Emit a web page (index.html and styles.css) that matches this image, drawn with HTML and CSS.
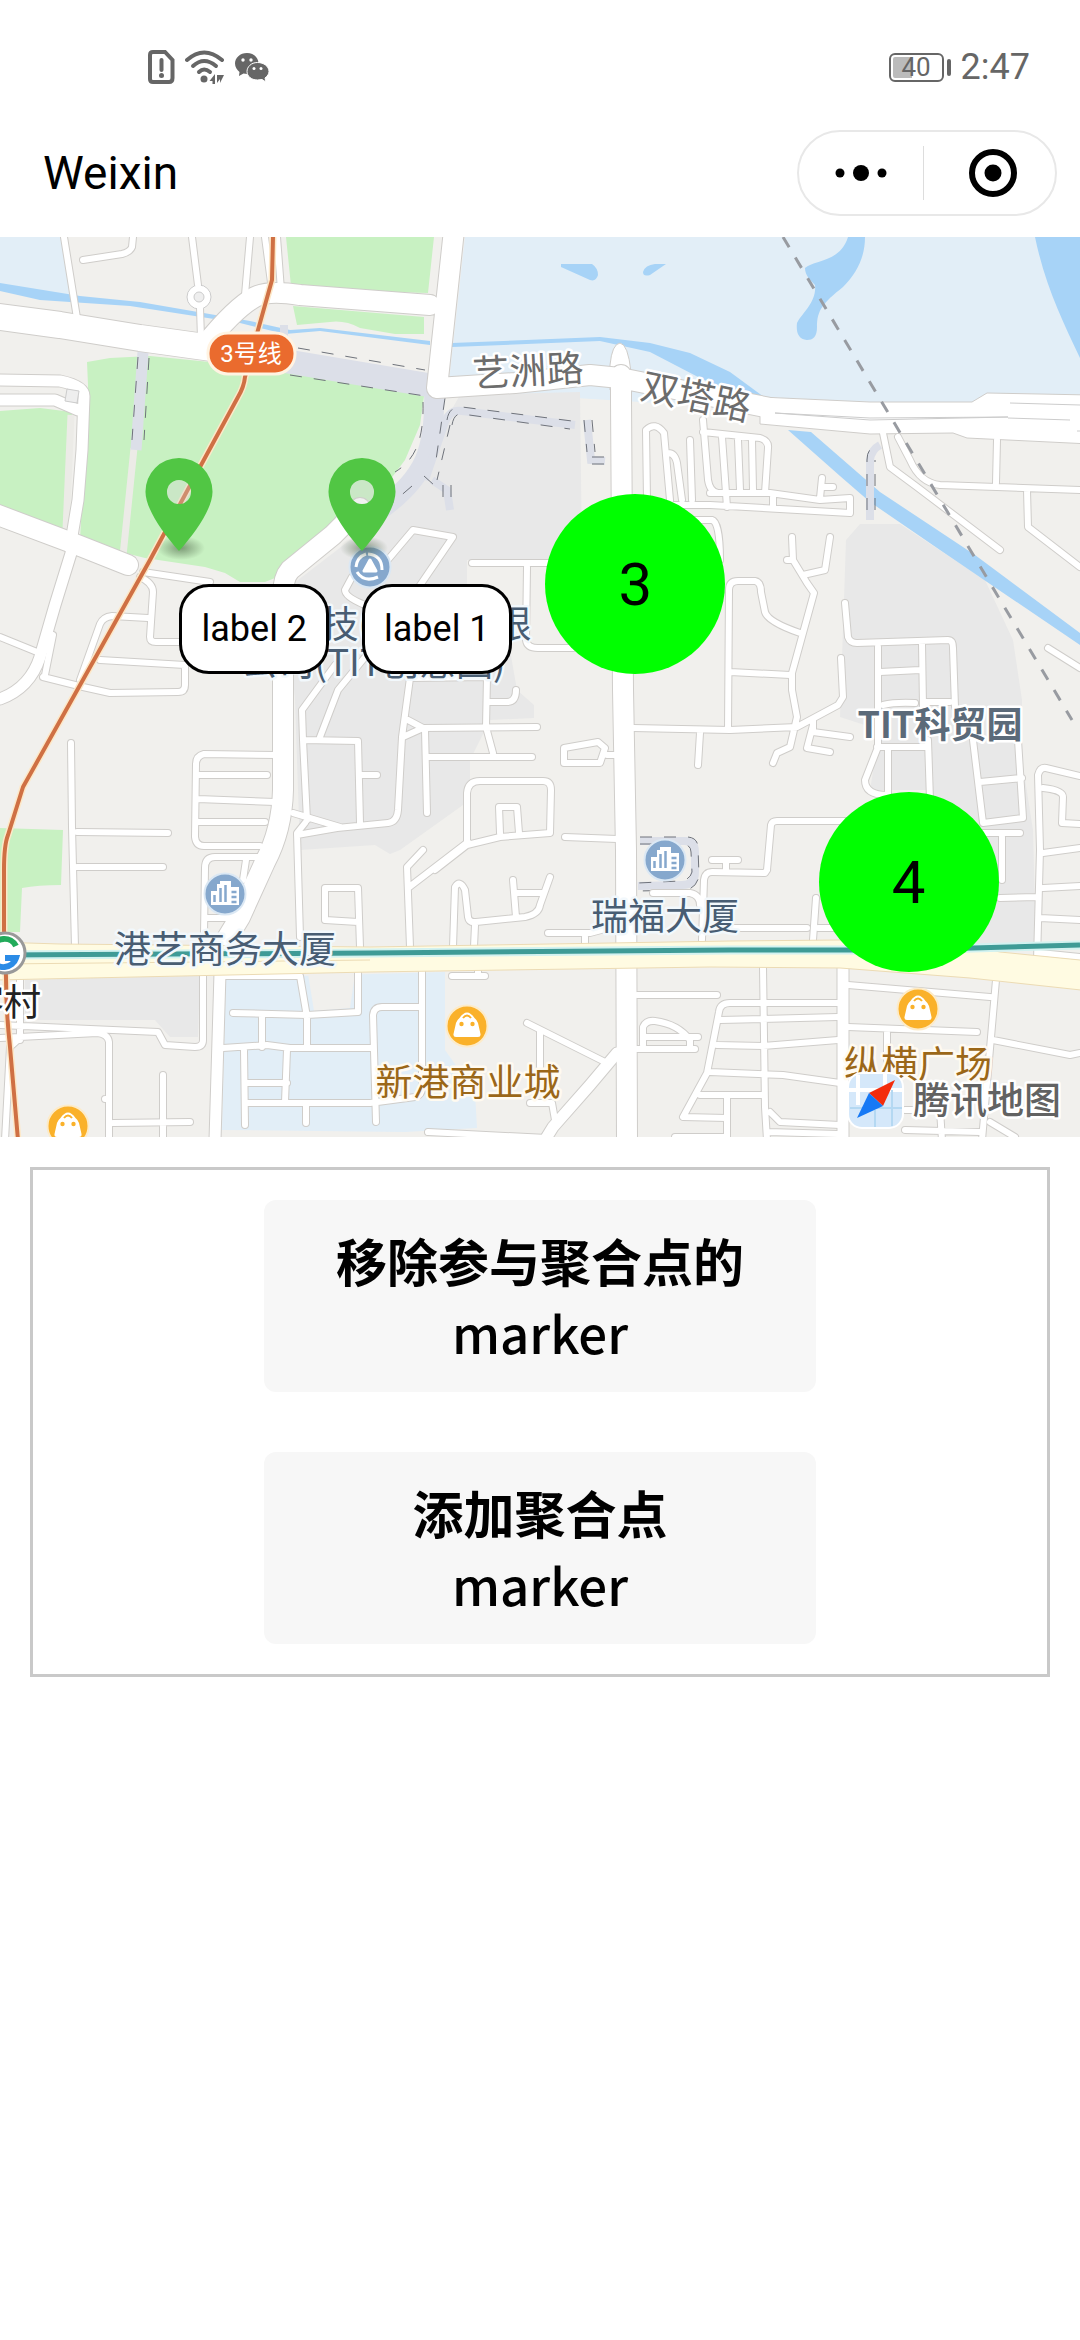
FILE: index.html
```html
<!DOCTYPE html>
<html lang="zh-CN">
<head>
    <meta charset="UTF-8">
    <meta name="viewport" content="width=device-width, initial-scale=1.0">
    <title>Weixin</title>
    <link rel="stylesheet" href="styles.css">
</head>
<body>
    <div class="status-bar">
        <div class="status-icons">
            <svg width="27" height="34" viewBox="0 0 27 34">
                <path d="M5 2H17L24.500 10V28Q24.500 32 21 32H5Q2 32 2 29V5Q2 2 5 2Z" fill="none" stroke="#666" stroke-width="4"/>
                <path d="M13.500 10V20" stroke="#666" stroke-width="4" stroke-linecap="round"/>
                <circle cx="13.500" cy="25.500" r="2.500" fill="#666"/>
            </svg>
            <svg width="40" height="34" viewBox="0 0 40 34">
                <g fill="none" stroke="#666" stroke-width="4" stroke-linecap="round">
                    <path d="M2 10Q19 -5 37 10"/>
                    <path d="M8 16Q19 6 31 16"/>
                    <path d="M14 22Q19 17 25 22"/>
                </g>
                <circle cx="19" cy="29" r="3.500" fill="#666"/>
                <path d="M30 24V34H27.500V31H24.500ZM32 25H39L35 33V29L32 33Z" fill="#666"/>
            </svg>
            <svg width="34" height="30" viewBox="0 0 34 30">
                <path d="M12 1C5 1 0 6 0 11.500C0 15 2 18 4.500 20L4 24L8.500 21.500L12 22C19 22 23.500 17 23.500 11.500S19 1 12 1Z" fill="#666"/>
                <path d="M22.500 10.500C16 10.500 12 15 12 19.500S16 28 22.500 28L27 27.500L31 30L30 26C32.500 24 34 22 34 19.500C34 14.500 29 10.500 22.500 10.500Z" fill="#666" stroke="#fff" stroke-width="1"/>
                <g fill="#fff"><circle cx="8" cy="8" r="1.700"/><circle cx="16" cy="8" r="1.700"/><circle cx="19" cy="16.500" r="1.500"/><circle cx="26" cy="16.500" r="1.500"/></g>
            </svg>
        </div>
        <div class="status-right">
            <span class="battery"><span class="battery-text">40</span></span>
            <span class="time">2:47</span>
        </div>
    </div>

    <header class="nav">
        <h1 class="nav-title">Weixin</h1>
        <div class="capsule">
            <button class="capsule-btn" type="button" aria-label="更多">
                <svg width="54" height="20" viewBox="0 0 54 20"><circle cx="6" cy="10" r="4.500"/><circle cx="27" cy="10" r="8"/><circle cx="48" cy="10" r="4.500"/></svg>
            </button>
            <button class="capsule-btn" type="button" aria-label="关闭">
                <svg width="50" height="50" viewBox="0 0 50 50"><circle cx="25" cy="25" r="21" fill="none" stroke="#000" stroke-width="6"/><circle cx="25" cy="25" r="8.500"/></svg>
            </button>
        </div>
    </header>

    <div class="map">
        <svg class="map-canvas" viewBox="0 237 1080 900" preserveAspectRatio="xMidYMid slice">
            <defs>
                <radialGradient id="pin-shadow">
                    <stop offset="0" stop-color="#4a6044" stop-opacity="0.600"/>
                    <stop offset="1" stop-color="#4a6044" stop-opacity="0"/>
                </radialGradient>
                <g id="roads-small">
                    <!-- north west -->
                    <path d="M64 237L77 318M133 237L132 247Q130 252 122 254L83 260M192 237L198 285M200 308L201 338M250 237L245 295M265 237L272 290M277 237L281 290"/>
                    <path d="M143 572L210 582M140 577Q153 583 153 592L150 637Q150 642 156 642H180M148 618L112 616Q103 617 100 624L80 680M100 660L185 665V685Q185 692 178 692L110 693L83 687L43 677M53 635L45 675M0 637L37 652"/>
                    <!-- west -->
                    <path d="M71 743L72 827L75 947M77 832L168 833M77 867H163M277 755L204 754Q196 756 196 764L195 837Q196 846 204 846H260M198 775H267M198 799L275 802M198 822H265M265 857H215Q205 857 205 868L204 935M246 860L243 880M207 918H235"/>
                    <path d="M325 888H358L360 947M325 888V920L358 922"/>
                    <!-- TIT park west -->
                    <path d="M375 645L338 690L320 737M335 665L302 710L303 740L307 820M303 740L358 741L360 823M362 775H377M293 813L340 827M305 823L297 833L300 937M297 835L337 828L388 823Q397 822 398 810L402 737L410 678L487 677L486 727L493 753M490 702H507Q516 702 516 690M408 720L423 728L537 727M403 737L423 728M425 730L427 813M428 757H532"/>
                    <path d="M375 575L413 530L453 537L410 600M352 577L345 590Q345 597 365 605M472 563H560M527 567L526 640Q527 648 538 648H573M564 748L598 742L605 748L600 763H564ZM607 755H617"/>
                    <path d="M435 870L467 845V793Q468 781 480 781H543Q551 781 551 790L550 833L500 837L467 845M500 833L499 807H517L519 833M423 850L407 867L410 947M408 888L468 842M565 837L617 839"/>
                    <path d="M453 947L455 887Q460 879 465 890L468 917Q469 923 476 922L525 917Q539 914 540 905L550 877M513 880L516 917M517 893H543M475 925L474 947M548 933H590L620 925M585 937V947"/>
                    <!-- north east -->
                    <path d="M647 500L646 430Q655 421 664 433L670 500M668 453Q675 453 677 463L682 500M690 440L692 500M703 420L708 480Q710 492 718 493H740M703 432L760 438Q769 441 768 448L765 493M722 437L727 507M738 440L740 490M752 440L753 490M640 505H710L850 513V498L820 500L770 493H710M822 478L820 498M823 487H833M773 495V508M693 520H712Q720 522 720 560"/>
                    <path d="M883 433L890 467L917 487L1000 550M898 437L910 460Q920 483 940 485L1080 490M997 440L996 483M1027 490L1028 527L1080 567M1048 648L1080 668"/>
                    <path d="M792 537L793 560L807 583L814 593L792 673V690L797 717L790 747L777 753L773 763M830 537L825 570L803 575M787 560H793M728 730L729 590Q729 581 738 581H755Q761 582 761 592L765 612Q768 622 800 633M730 672L790 675M633 728L730 730L797 727L838 705L843 697L841 658M700 733L698 765M813 720V732L850 737M813 725L807 748L830 752"/>
                    <!-- TIT park east -->
                    <path d="M845 603L848 637Q850 643 857 643L948 640Q953 640 953 648L955 707M878 647V747L865 780Q865 795 887 795M922 643L923 707M880 672L920 670M923 702H950M883 705Q895 702 915 703M877 747H928M888 750V795M928 740L930 800M973 740L983 823L1023 818L1018 740M980 782L1022 778M980 833H1020M1002 837V880"/>
                    <path d="M1037 960L1040 850L1038 775Q1040 767 1046 768L1080 776M1043 788Q1063 790 1063 797L1062 823L1080 824M1043 853L1080 848M1043 888L1080 886M1040 918L1080 920M1000 898L1037 897M1040 953L1080 957M767 870L771 825Q772 821 777 821H847M767 870L765 873L712 872Q705 872 704 880L702 940M712 860H738M726 862V872M653 893H690Q700 895 700 905M710 928H807M816 898L813 940M818 928H840"/>
                    <!-- south west -->
                    <path d="M203 975V1040Q203 1047 195 1047L165 1045L158 1032L0 1025M20 980V1040M0 1038L97 1033Q108 1034 109 1042V1140M20 1038L10 1047L5 1140M105 1099H108M163 1075V1140M113 1123L190 1122"/>
                    <path d="M225 976H300L307 1017V1047M233 1013L307 1015L358 1012V973M262 1017V1047M223 1048L267 1045L290 1048H373M244 1050L245 1125M287 1050L285 1102M247 1083H287M247 1103H370L415 1097Q422 1095 422 1088V970M306 1103V1123M376 1122L373 1015Q374 1007 382 1007H420M452 976H485M478 968V976"/>
                    <!-- south east -->
                    <path d="M527 1023L605 1062M540 1030V1067M530 1103H552L555 1120M428 1132L547 1138M637 995H717M643 1045V1027Q646 1020 655 1021Q678 1024 690 1040V1049M643 1037H698M637 1049H695"/>
                    <path d="M840 1003H730Q720 1003 719 1012L707 1073L683 1117L727 1118M720 1020L838 1017M717 1045L763 1046L838 1040M710 1072L783 1075L840 1083M700 1095H762M763 967L765 1107L767 1140M770 1112L780 1122L840 1125M768 1132L838 1134M727 1097V1140M675 1137H725M848 985L990 997M996 980L982 1140M993 1040L1070 1055L1080 1053M848 1027L977 1032M887 1033V1060M905 1110H940L942 1140M905 1130L980 1132M990 1122L1015 1137"/>
                </g>
                <g id="roads-medium">
                    <path d="M0 380L60 381Q84 386 84 396L82 450L78 500L70 548M0 400L55 400L78 410M72 550L55 605L40 657Q30 688 0 699M220 973L215 1140M617 1053L590 1085L553 1127L545 1140M843 965V1140"/>
                </g>
                <g id="roads-large">
                    <path d="M-10 512L75 544L128 565M360 508L333 535L290 570Q283 578 283 595V790Q282 830 265 862L240 917L220 950"/>
                    <path d="M205 345Q235 308 255 297Q268 290 300 295L430 305M454 230L437 388L515 383L590 375L620 378L700 394L790 412M621 375V400L623 690L626 850L627 1140"/>
                </g>
                <symbol id="pin" viewBox="0 0 68 104">
                    <ellipse cx="36" cy="90" rx="24" ry="12" fill="url(#pin-shadow)"/>
                    <path d="M34 0A33.500 33.500 0 0 0 0.500 34C0.500 50 17 74 34 93C51 74 67.500 50 67.500 34A33.500 33.500 0 0 0 34 0ZM34 22A12 12 0 1 1 34 46A12 12 0 1 1 34 22Z" fill="#51c644" fill-rule="evenodd"/>
                    <circle cx="34" cy="34" r="12" fill="#cfcfcf" opacity="0.300"/>
                </symbol>
                <symbol id="poi-building" viewBox="0 0 44 44">
                    <circle cx="22" cy="22" r="20.500" fill="#86a8cd" stroke="#dbe8f4" stroke-width="2"/>
                    <path d="M8 33V19H14V12H17V9H28V15H36V33Z" fill="#fff"/>
                    <path d="M11.500 23V30M17.500 16V30M22.500 13V30M28.500 20H33.500M28.500 25H33.500M28.500 30H33.500" stroke="#86a8cd" stroke-width="2.500"/>
                </symbol>
                <symbol id="poi-shop" viewBox="0 0 44 44">
                    <circle cx="22" cy="22" r="20.500" fill="#fab12a" stroke="#fdebc8" stroke-width="2"/>
                    <path d="M11 33Q8 33 8.500 30L11 19Q12 16 14.500 14Q22 3 29.500 14Q32 16 33 19L35.500 30Q36 33 33 33Z" fill="#fff"/>
                    <path d="M18 14Q22 9 26 14" fill="none" stroke="#fab12a" stroke-width="2"/>
                    <circle cx="16.500" cy="20" r="2.200" fill="#fab12a"/><circle cx="27.500" cy="20" r="2.200" fill="#fab12a"/>
                </symbol>
            </defs>

            <rect class="land" y="237" width="1080" height="900"/>

            <!-- campus and water front -->
            <path class="campus" d="M0 237H61L70 299L0 285ZM465 237H1080V410H770L448 390ZM226 978L445 972V1050L475 1092L477 1128L405 1132L222 1130Z"/>
            <path class="land" d="M308 974H355L350 1008L314 1011Z"/>
            <path class="block" d="M285 590L350 540L400 505L420 470L440 430L460 395L580 392L582 560H467V600L510 650L517 690L534 705V718L490 720L470 760V800L400 850L390 854L375 845L300 850L295 700Z"/>
            <path class="block" d="M860 524H900L985 580L1013 640L1022 700V760L1033 830L1036 945L970 948L985 850L930 790L870 790L880 730L840 717L846 540Z"/>
            <path class="block" d="M25 980L200 975L198 1037H170L155 1020H25Z"/>

            <!-- parks -->
            <path class="park" d="M286 237H434L428 293L360 291L291 286ZM293 306L424 317V334H395L360 328Q345 320 330 322L297 325ZM87 362L110 358L150 356L210 362L360 383L424 396L420 425L405 460L360 520L335 540L275 578L265 582H240L225 573L205 567L145 558L125 553L80 540L88 385Z"/>
            <path class="park" d="M0 411L40 408L72 412L66 530L0 505ZM0 828L63 830L61 885Q38 885 22 888L20 932H0Z"/>
            <path class="footpath" d="M134 448L123 556M71 415L66 530"/>

            <!-- rivers -->
            <path class="water" d="M0 283L80 296L140 302L250 321L290 330L320 328L430 341V345L320 331L285 334L240 323L130 306L40 300L0 291ZM452 343L600 337L650 343L690 353L730 372L768 400L745 398L700 378L650 352L600 341L452 347ZM788 430L811 432L880 492L975 555L1080 633V645L940 550L870 502L840 476Z"/>
            <path class="water" d="M848 237H865C865 257 857 273 843 287C823 303 817 310 817 327C817 337 813 340 807 340C798 339 796 332 797 323C802 313 817 302 815 285C810 280 805 275 805 268C813 260 840 263 848 237ZM1035 237H1080V358C1062 320 1045 285 1035 237ZM561 264H592Q598 268 598 275Q596 282 590 280L561 267ZM643 272Q645 265 655 264H666L650 275Q643 277 643 272Z"/>

            <!-- underpasses -->
            <g class="tunnel">
                <path stroke-width="11" d="M143 352L136 450"/>
                <path stroke-width="24" d="M285 361L428 385"/>
                <path stroke-width="20" d="M434 388C436 450 425 478 380 510"/>
                <path stroke-width="8" d="M425 480L445 422Q450 409 462 411L575 425M587 420L591 460L605 461M432 480L447 490L450 510M870 520V460Q871 450 880 445"/>
                <path stroke-width="8" d="M640 841H685Q695 841 695 852V872Q695 885 682 885L638 886M284 325V340"/>
            </g>
            <path class="tunnel-edge" d="M138 357L132 440M149 358L144 440M298 348L425 370M290 375L425 396M423 402C424 440 415 460 395 472M445 398L436 460M412 486L390 505M447 420Q449 406 462 407L572 421M452 425Q454 413 462 414L570 429M450 425L437 480M584 420L587 452M592 420L595 452M592 457H606M592 464H606M424 476L434 485M443 485V498M451 485V498M867 510V460Q867 450 873 448M875 510V460"/>
            <path class="tunnel-edge" d="M640 837H688Q698 838 698 848L699 875Q697 889 684 890L638 891M640 844H683Q691 845 691 852L692 872Q690 880 680 881L638 883"/>

            <!-- streets: outline first, white on top -->
            <path class="avenue" d="M610 390V365Q612 344 620 343Q628 344 631 372V390Z"/>
            <use href="#roads-small" class="road small-case"/>
            <use href="#roads-medium" class="road medium-case"/>
            <use href="#roads-large" class="road large-case"/>
            <path class="road west-case" d="M-15 315L60 325L140 338L212 348"/>
            <path class="avenue" d="M760 397L870 402H972L987 393L1090 395V444L967 438L953 433L870 434L760 424Z"/>
            <circle cx="199" cy="297" r="12" fill="#fff" stroke="#ccc"/>
            <use href="#roads-small" class="road small"/>
            <use href="#roads-medium" class="road medium"/>
            <use href="#roads-large" class="road large"/>
            <path class="road west" d="M-15 315L60 325L140 338L212 348"/>
            <circle cx="199" cy="297" r="5" fill="#eee" stroke="#ccc"/>
            <path fill="#eee" stroke="#ccc" d="M67 389L79 391L77 403L65 401Z"/>
            <path fill="none" stroke="#ccc" d="M775 413L870 420L1008 417L870 418ZM1010 403L1080 405M1008 418L1070 420M1077 431H1080"/>

            <path class="main-road" d="M-5 942L60 944L370 947L730 941L840 940L960 943L1000 952L1090 961V991L970 978L840 968L710 967L370 972L-5 980Z"/>
            <path class="main-road-line" d="M0 964L200 962L370 960"/>
            <path class="rail" d="M783 237L1072 720"/>
            <path class="line-8-case" d="M0 955L370 953L730 950L900 950L1080 945"/>
            <path class="line-8" d="M0 955L370 953L730 950L900 950L1080 945"/>
            <path class="line-3-case" d="M273 237L272 280L258 330L245 377Q244 387 238 397L200 467L150 560L23 787L8 835Q4 845 4 870V930L6 977Q6 1010 10 1047L18 1140"/>
            <path class="line-3" d="M273 237L272 280L258 330L245 377Q244 387 238 397L200 467L150 560L23 787L8 835Q4 845 4 870V930L6 977Q6 1010 10 1047L18 1140"/>

            <!-- metro badges -->
            <rect x="208" y="333" width="87" height="41" rx="20" fill="#ea6b2e" stroke="#fff3e2" stroke-width="3"/>
            <text class="line-name" x="251" y="362">3号线</text>
            <circle cx="5" cy="953" r="20" fill="#fff" stroke="#999" stroke-width="3"/>
            <path d="M-8 948A13 13 0 0 1 16 946" fill="none" stroke="#22ab5b" stroke-width="6"/>
            <path d="M-8 960A13 13 0 0 0 16 958H5" fill="none" stroke="#2b8be6" stroke-width="6"/>

            <!-- places -->
            <use href="#poi-building" x="203" y="872" width="44" height="44"/>
            <use href="#poi-building" x="643" y="838" width="44" height="44"/>
            <use href="#poi-shop" x="445" y="1004" width="44" height="44"/>
            <use href="#poi-shop" x="896" y="987" width="44" height="44"/>
            <use href="#poi-shop" x="46" y="1104" width="44" height="44"/>
            <circle cx="370" cy="567" r="20.500" fill="#86a8cd" stroke="#dbe8f4" stroke-width="2"/>
            <path d="M368 554Q382 555 382 570M378 577Q364 583 357 572M356 567Q357 557 366 554" fill="none" stroke="#fff" stroke-width="3"/>
            <path d="M370 560L376 571H364Z" fill="#fff" stroke="#fff" stroke-width="3" stroke-linejoin="round"/>

            <g class="place office">
                <text x="225" y="963">港艺商务大厦</text>
                <text x="665" y="930">瑞福大厦</text>
                <text x="371" y="638">腾讯科技(广州)有限</text>
                <text x="373" y="676">公司(TIT创意园)</text>
            </g>
            <g class="place shop">
                <text x="468" y="1096">新港商业城</text>
                <text x="918" y="1078">纵横广场</text>
            </g>
            <text class="place area" x="940" y="738">TIT科贸园</text>
            <text class="place station" x="4" y="1016">客村</text>
            <g class="place street">
                <text x="528" y="384" transform="rotate(-3 528 371)">艺洲路</text>
                <text x="696" y="410" transform="rotate(12 696 397)">双塔路</text>
            </g>

            <!-- map provider -->
            <rect x="848" y="1073" width="55" height="55" rx="14" fill="#d5e8fa" stroke="#fff" stroke-width="2"/>
            <path d="M849 1090H902M858 1075V1105M885 1074V1090" stroke="#fff" stroke-width="4"/>
            <path d="M850 1108H902M875 1110V1127M892 1090V1126" stroke="#b4d8f2" stroke-width="2"/>
            <path d="M895 1080L869 1093L883 1106Z" fill="#f32c0c"/>
            <path d="M857 1118L869 1093L883 1106Z" fill="#1679f5"/>
            <text class="place provider" x="987" y="1114">腾讯地图</text>

            <use href="#pin" x="145" y="458" width="68" height="104"/>
            <use href="#pin" x="328" y="458" width="68" height="104"/>
        </svg>

        <button class="callout callout-2" type="button">label 2</button>
        <button class="callout callout-1" type="button">label 1</button>
        <button class="cluster cluster-3" type="button">3</button>
        <button class="cluster cluster-4" type="button">4</button>
    </div>

    <main class="panel">
        <button class="btn" type="button">移除参与聚合点的 <span class="btn-latin">marker</span></button>
        <button class="btn" type="button">添加聚合点 <span class="btn-latin">marker</span></button>
    </main>
</body>
</html>
```
FILE: styles.css
```css
:root {
    --gray: #666666;
    --border: #c9c9c9;
    --cluster: #00ff00;
    --halo: #ffffff;
}

* {
    margin: 0;
    padding: 0;
    box-sizing: border-box;
}

body {
    font-family: Roboto, 'Noto Sans CJK SC', sans-serif;
    color: #000;
    background-color: #fff;
    min-height: 100vh;
}

button {
    font-family: inherit;
    color: inherit;
    border: none;
    background: none;
    cursor: pointer;
}

.status-bar {
    height: 130px;
    padding: 4px 50px 0 148px;
    display: flex;
    align-items: center;
    justify-content: space-between;
    color: var(--gray);
}

.status-icons,
.status-right {
    display: flex;
    align-items: center;
    gap: 10px;
}

.status-right {
    gap: 17px;
}

.battery {
    position: relative;
    width: 55px;
    height: 29px;
    border: 2px solid var(--gray);
    border-radius: 6px;
    display: flex;
    align-items: center;
    justify-content: center;
    background: linear-gradient(90deg, #bbb 40%, transparent 40%) content-box;
    padding: 2px;
}

.battery::after {
    content: '';
    position: absolute;
    right: -9px;
    top: 4px;
    width: 4px;
    height: 17px;
    border-radius: 2px;
    background: var(--gray);
}

.battery-text {
    font-size: 26px;
    line-height: 26px;
}

.time {
    font-size: 36px;
    line-height: 40px;
}

.nav {
    display: flex;
    align-items: center;
    justify-content: space-between;
    padding: 0 23px 21px 43px;
}

.nav-title {
    font-size: 46px;
    font-weight: 400;
}

.capsule {
    display: flex;
    width: 260px;
    height: 86px;
    border: 2px solid #e8e8e8;
    border-radius: 43px;
    align-items: center;
}

.capsule-btn {
    flex: 1;
    height: 54px;
    display: flex;
    align-items: center;
    justify-content: center;
}

.capsule-btn + .capsule-btn {
    border-left: 1px solid #ddd;
    padding-left: 8px;
}

/* Map */
.map {
    position: relative;
    height: 900px;
    overflow: hidden;
}

.map-canvas {
    display: block;
    width: 100%;
    height: 100%;
}

.land { fill: #f1f0ed; }
.campus { fill: #e2eef7; }
.block { fill: #e8e8e8; }
.park { fill: #c8f1c2; }
.water { fill: #a7d3f7; }

.footpath {
    fill: none;
    stroke: #ecebe7;
    stroke-width: 7;
}

.tunnel {
    fill: none;
    stroke: #dcdfe8;
}

.tunnel-edge {
    fill: none;
    stroke: #6f737b;
    stroke-width: 1;
    stroke-dasharray: 12 12;
}

.road {
    fill: none;
    stroke: #fff;
    stroke-linecap: round;
    stroke-linejoin: round;
}

.small-case,
.medium-case,
.large-case,
.west-case {
    stroke: #cfcdca;
}

.small-case { stroke-width: 8; }
.small { stroke-width: 6; }
.medium-case { stroke-width: 13; }
.medium { stroke-width: 11; }
.large-case { stroke-width: 22; }
.large { stroke-width: 20; }
.west-case { stroke-width: 28; }
.west { stroke-width: 26; }

.avenue {
    fill: #fff;
    stroke: #cfcdca;
}

.main-road {
    fill: #fffbe2;
    stroke: #ecdbb4;
}

.main-road-line {
    fill: none;
    stroke: #ecdbb4;
}

.rail {
    fill: none;
    stroke: #989ba1;
    stroke-width: 3;
    stroke-dasharray: 12 12;
}

.line-8-case,
.line-8,
.line-3-case,
.line-3 {
    fill: none;
    stroke-linejoin: round;
}

.line-8-case {
    stroke: #d3f2f0;
    stroke-width: 9;
}

.line-8 {
    stroke: #3f9b96;
    stroke-width: 5;
}

.line-3-case {
    stroke: #fde8c8;
    stroke-width: 7;
}

.line-3 {
    stroke: #cf7044;
    stroke-width: 4;
}

.line-name {
    font-size: 24px;
    fill: #fff;
    text-anchor: middle;
}

.place {
    font-family: 'Noto Sans CJK SC', sans-serif;
    font-size: 37px;
    text-anchor: middle;
    stroke: var(--halo);
    stroke-width: 5;
    stroke-linejoin: round;
    paint-order: stroke;
}

.office {
    fill: #485d73;
    stroke: #f2f8fc;
}

.shop {
    fill: #9b6718;
    stroke: #fffaf0;
}

.area {
    fill: #5b6a79;
    font-size: 36px;
    font-weight: 700;
}

.station {
    fill: #222;
}

.street {
    fill: #6c6c6c;
}

.provider {
    fill: #626262;
    font-weight: 500;
}

.callout {
    position: absolute;
    top: 347px;
    width: 150px;
    height: 90px;
    border: 3px solid #000;
    border-radius: 30px;
    background: #fff;
    font-size: 36px;
}

.callout-2 { left: 16.6%; }
.callout-1 { left: 33.5%; }

.cluster {
    position: absolute;
    width: 180px;
    height: 180px;
    border-radius: 50%;
    background: var(--cluster);
    font-size: 60px;
}

.cluster-3 {
    left: 50.5%;
    top: 257px;
}

.cluster-4 {
    left: 75.8%;
    top: 555px;
}

/* Actions */
.panel {
    margin: 30px;
    padding: 30px;
    border: 3px solid var(--border);
    display: flex;
    flex-direction: column;
    align-items: center;
    gap: 60px;
}

.btn {
    width: 552px;
    max-width: 100%;
    padding: 24px 66px;
    border-radius: 12px;
    background: #f7f7f7;
    font-family: 'Noto Sans CJK SC', sans-serif;
    font-size: 51px;
    font-weight: 700;
    line-height: 72px;
}

.btn-latin {
    font-weight: 500;
}
```
